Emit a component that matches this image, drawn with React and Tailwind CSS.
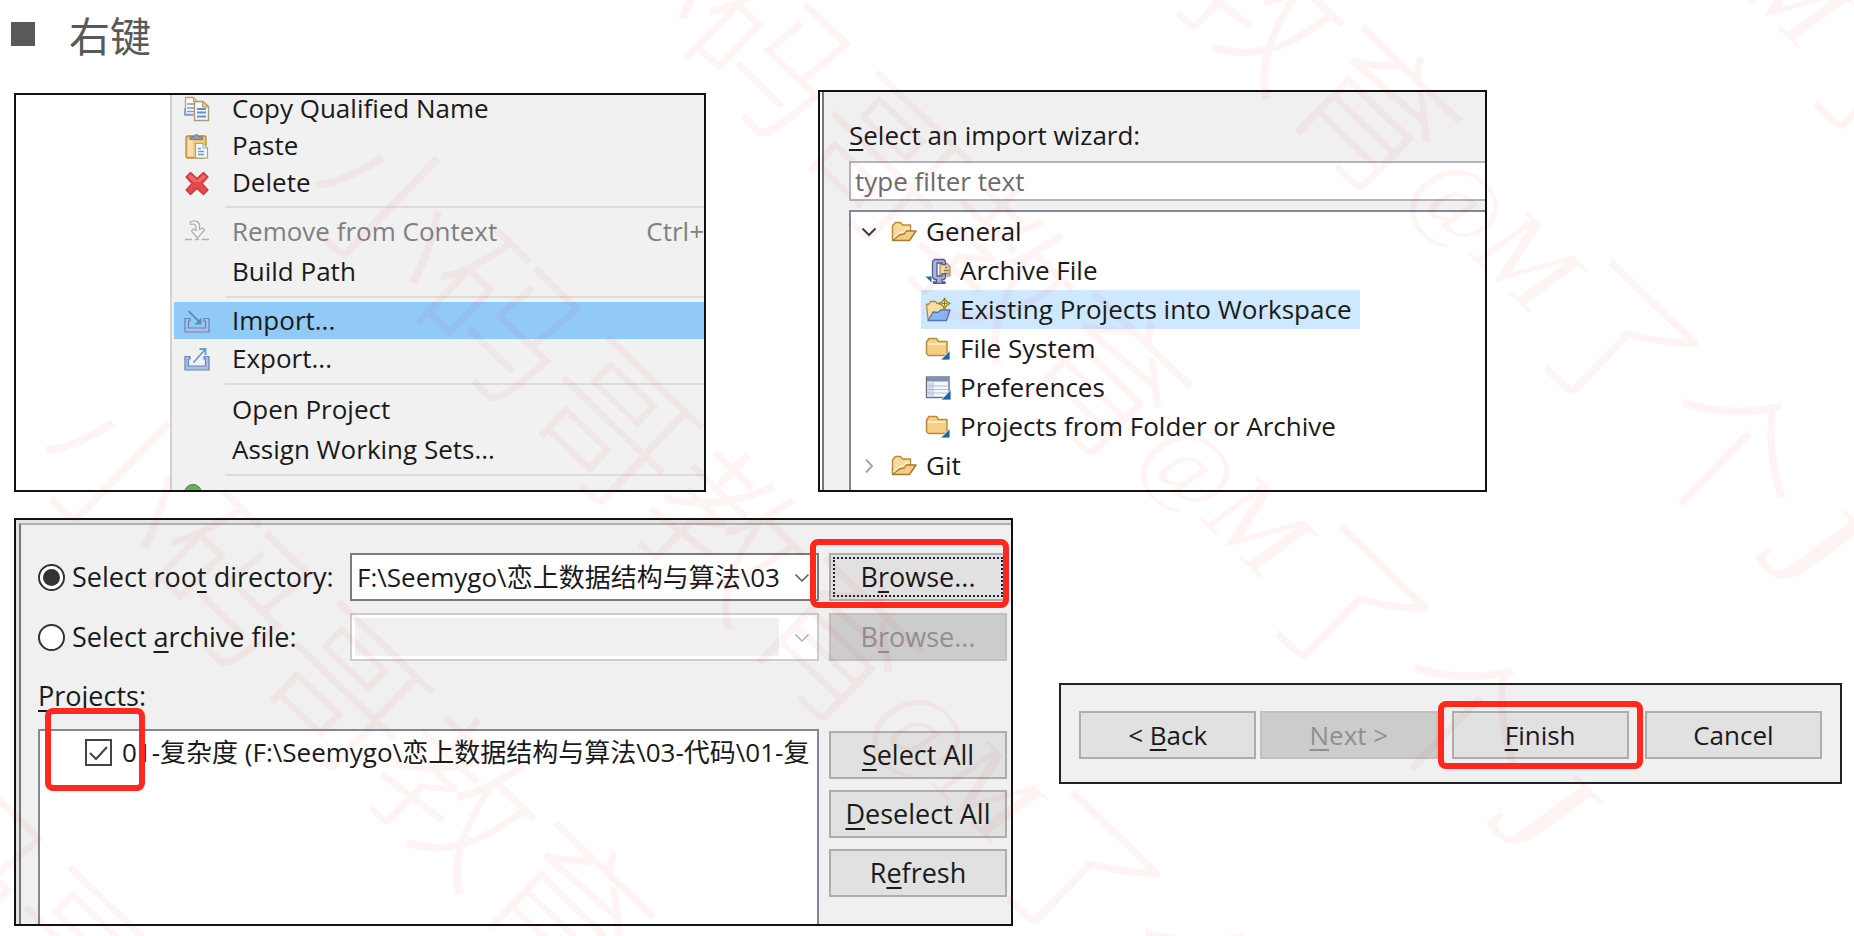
import React from "react";

const UI_FONT = "font-['Open_Sans','Noto_Sans_CJK_SC',sans-serif]";

/* ---------- icons ---------- */

function CopyIcon() {
  return (
    <svg viewBox="0 0 26 26" className="h-[26px] w-[26px]" aria-hidden="true">
      <path d="M1.5 1.5h8l4 4v13h-12z" fill="#f7f9fd" stroke="#b5a46c" strokeWidth="1.3" />
      <path d="M9.5 1.5v4h4" fill="#e9cf86" stroke="#b5a46c" />
      <path d="M3 8h8M3 12h8M3 15.500h8M1 12v7h8" stroke="#7c98cf" strokeWidth="1.6" fill="none" />
      <path d="M10.500 5.500h8.500l5.500 5v14h-14z" fill="#f4f8fe" stroke="#a99b74" strokeWidth="1.4" />
      <path d="M18.500 5.500v5.500h6z" fill="#f2d47f" stroke="#b9974d" />
      <path d="M13 13h9M13 16.500h9M13 20.500h9" stroke="#6b8ccb" strokeWidth="1.800" />
    </svg>
  );
}

function PasteIcon() {
  return (
    <svg viewBox="0 0 26 26" className="h-[26px] w-[26px]" aria-hidden="true">
      <rect x="2" y="3" width="20" height="22" rx="1.500" fill="#f3c877" stroke="#b78a3e" strokeWidth="1.300" />
      <rect x="4" y="6" width="5" height="17" fill="#fbe0a6" />
      <path d="M6 6.500V4h3.500C10 1 14.500 1 15 4h3.500v2.500z" fill="#8d9cc0" stroke="#68779f" />
      <path d="M11.500 10.500h7.500l4.500 4.500v10h-12z" fill="#f3f9ff" stroke="#a3a68f" strokeWidth="1.200" />
      <path d="M19 10.500v4.500h4.500" fill="#dce6f2" stroke="#a3a68f" />
      <path d="M14 15.500h3M14 18.500h6M14 21.500h6" stroke="#6696cf" strokeWidth="1.300" />
    </svg>
  );
}

function DeleteIcon() {
  return (
    <svg viewBox="0 0 26 26" className="h-[26px] w-[26px]" aria-hidden="true">
      <path
        d="M6.500 2.500 13 8.500l6.500-6 4.500 4.500-6 6.500 6 6.500-4.500 4.500-6.500-6-6.500 6L2 20l6-6.500L2 7z"
        fill="#e5484a"
        stroke="#c9383c"
        strokeWidth="1.200"
        strokeLinejoin="round"
      />
      <path d="M6.500 4.500 13 10.500l6.500-6L22 7l-6 5H10L4 7z" fill="#f0787a" opacity="0.700" />
    </svg>
  );
}

function RemoveIcon() {
  return (
    <svg viewBox="0 0 26 26" className="h-[26px] w-[26px]" fill="none" stroke="#b0b0b0" strokeWidth="1.300" aria-hidden="true">
      <path d="M6 3.500C9 .5 15 2 15.500 6v4.500L18.500 9l2 2-7 8-6-7 2-2 2.500 1.500V8C12 5.500 9.500 4.500 7 5.500z" fill="#f4f4f4" />
      <path d="M1 20.500h7M11 20.500h4M18 20.500h7" strokeWidth="1.700" />
    </svg>
  );
}

function TrayIcon({ out }) {
  return (
    <svg viewBox="0 0 26 26" className="h-[26px] w-[26px]" aria-hidden="true">
      <path
        d="M1 10.500h5v2.500h-1.500v7h17v-7H20v-2.500h5V24H1z"
        fill="#a9bfe6"
        stroke="#6685b8"
        strokeWidth="1.200"
      />
      {out ? (
        <path d="M9.500 16.500 21 3.500M15.500 3h6v6" fill="none" stroke="#6b9cc9" strokeWidth="1.800" />
      ) : (
        <g>
          <path d="M4.500 3 16 14.500" stroke="#5b8fc0" strokeWidth="1.800" />
          <path d="M17.500 9.500v7h-7z" fill="#5b8fc0" />
        </g>
      )}
    </svg>
  );
}

function OpenFolderIcon() {
  return (
    <svg viewBox="0 0 26 22" className="h-[22px] w-[26px] shrink-0" strokeLinejoin="round" aria-hidden="true">
      <path d="M1.500 19.500V5l3-3.500h5l2 2.500h8v6" fill="#f7da9b" stroke="#b98a3c" strokeWidth="1.500" />
      <path d="M1.500 19.500 8.500 14l4.500-1 2-3h10L18.500 19.500z" fill="#f5ce80" stroke="#a97c35" strokeWidth="1.500" />
      <path d="M2.500 17 8 12l5-1 2-3.500h4" fill="none" stroke="#fdf0cd" strokeWidth="1.500" />
    </svg>
  );
}

function ClosedFolderIcon() {
  return (
    <svg viewBox="0 0 26 26" className="h-[26px] w-[26px] shrink-0" strokeLinejoin="round" aria-hidden="true">
      <path d="M1.500 17.500V6l2.500-3.500h7.500l2 3H22v14H3.500z" fill="#f5cf85" stroke="#b98a3c" strokeWidth="1.500" />
      <path d="M3 8h17.500" stroke="#fdebc0" strokeWidth="2" />
      <path d="M25 14.500V24h-9.500z" fill="#1866a5" stroke="#fff" strokeWidth="0.800" />
    </svg>
  );
}

function ArchiveIcon() {
  return (
    <svg viewBox="0 0 26 26" className="h-[26px] w-[26px] shrink-0" aria-hidden="true">
      <path d="M15 5.500h7l3 3.500v9H15z" fill="#f3dcae" stroke="#a08a5c" strokeWidth="1.200" />
      <path d="M20 9.500h2.500M19 12.500h5M19 15.500h5" stroke="#8b8371" strokeWidth="1.300" />
      <path
        d="M9.500 1.500h9.500l1.500 2v3h-3.500V5h-5v13h5v-2h3.500v4L19 21.500h-2V24h3v1.400H8.500V24h3v-2.500h-2L7.500 19.500v-16z"
        fill="#aab6dd"
        stroke="#4f5f98"
        strokeWidth="1.300"
      />
      <path d="M.5 18.500h6v6z" fill="#1d6ba8" />
    </svg>
  );
}

function ImportProjectIcon() {
  return (
    <svg viewBox="0 0 26 26" className="h-[26px] w-[26px] shrink-0" strokeLinejoin="round" aria-hidden="true">
      <path d="M3 22.500 1.500 7.500 4 7l1.500-2.500h5l1.500 2h7v8" fill="#f9dea0" stroke="#a98947" strokeWidth="1.300" />
      <path d="M3 23.500 8 15l5 .5 2.500-2.500H25l-3.500 10.500z" fill="#8fb5ee" stroke="#4d76b8" strokeWidth="1.300" />
      <path d="M19.500 1.200 21.500 4.500 25 6.500 21.500 8.500 19.500 12 17.500 8.500 14 6.500 17.500 4.500z" fill="#fbe789" stroke="#8f7a1c" strokeWidth="1.200" />
      <path d="M19.500 3.500v6M16.500 6.500h6" stroke="#8f7a1c" strokeWidth="1" />
    </svg>
  );
}

function PreferencesIcon() {
  return (
    <svg viewBox="0 0 26 26" className="h-[26px] w-[26px] shrink-0" aria-hidden="true">
      <rect x="1.500" y="2" width="22.500" height="20.500" fill="#f5f8fd" stroke="#66708a" strokeWidth="1.400" />
      <rect x="2" y="2.500" width="21.500" height="4" fill="#7f8db0" />
      <rect x="2.500" y="6.500" width="5" height="15.500" fill="#d5def0" />
      <path d="M8 6v16M2 11h21.500M2 14.500h21.500M2 18h21.500" stroke="#b3bccf" strokeWidth="1" />
      <path d="M26 14.500V25h-10z" fill="#1866a5" stroke="#fff" strokeWidth="0.800" />
    </svg>
  );
}

function Chevron({ open, className }) {
  return (
    <svg viewBox="0 0 18 18" className={className} fill="none" stroke="currentColor" aria-hidden="true">
      <path d={open ? "M2.500 5.500 9 12l6.500-6.500" : "M6 2.500 12 9l-6 6.500"} />
    </svg>
  );
}

/* ---------- small parts ---------- */

const Key = ({ children }) => (
  <span className="underline decoration-2 underline-offset-4">{children}</span>
);

const Highlight = ({ className }) => (
  <span
    aria-hidden="true"
    className={"pointer-events-none absolute z-10 rounded-lg border-[6px] border-[#ff281e] " + className}
  />
);

function PushButton({ children, disabled, className = "" }) {
  return (
    <button
      type="button"
      disabled={disabled}
      className={
        "block h-12 w-full border-2 text-center whitespace-nowrap " +
        (disabled ? "border-[#c0c0c0] bg-[#cccccc] text-[#909090] " : "border-[#adadad] bg-[#e1e1e1] text-[#1a1a1a] ") +
        className
      }
    >
      {children}
    </button>
  );
}

function MenuRow({ icon, label, shortcut, className }) {
  return (
    <li>
      <button type="button" className={"flex w-full items-center text-left whitespace-nowrap " + className}>
        <span className="flex w-[46px] shrink-0 justify-center">{icon}</span>
        <span className="flex-1 pl-3">{label}</span>
        {shortcut && <span>{shortcut}</span>}
      </button>
    </li>
  );
}

const MenuRule = () => (
  <li role="separator" className="ml-[51px] flex h-[11px] items-center">
    <span className="h-0.5 w-full bg-[#dcdcdc]" />
  </li>
);

/* ---------- panels ---------- */

function ContextMenu() {
  return (
    <section className="flex min-w-0 overflow-hidden border-2 border-[#111] bg-white">
      <div className="w-[154px] shrink-0" />
      <ul className="min-w-0 flex-1 border-l-2 border-[#d2d2d2] bg-[#f1f1f1] pl-0.5">
        <MenuRow className="h-8 pb-[5px] leading-[27px]" icon={<CopyIcon />} label="Copy Qualified Name" />
        <MenuRow className="h-[37px]" icon={<PasteIcon />} label="Paste" />
        <MenuRow className="h-[37px]" icon={<DeleteIcon />} label="Delete" />
        <MenuRule />
        <MenuRow className="h-[39px] text-[#808080]" icon={<RemoveIcon />} label="Remove from Context" shortcut="Ctrl+" />
        <MenuRow className="h-10" label="Build Path" />
        <MenuRule />
        <MenuRow className="h-[37px] bg-[#91c9f7]" icon={<TrayIcon />} label="Import..." />
        <MenuRow className="h-[39px]" icon={<TrayIcon out />} label="Export..." />
        <MenuRule />
        <MenuRow className="h-10" label="Open Project" />
        <MenuRow className="h-10" label="Assign Working Sets..." />
        <MenuRule />
        <li className="flex h-[10px] items-end pl-[10px]">
          <svg viewBox="0 0 18 6" className="h-1.5 w-[18px]" aria-hidden="true">
            <circle cx="9" cy="9" r="8.500" fill="#62b551" stroke="#3c8a34" />
          </svg>
        </li>
      </ul>
    </section>
  );
}

function TreeGroup({ label, open }) {
  return (
    <div className="flex h-[39px] items-center pl-[9px]">
      <Chevron
        open={open}
        className={"mr-[13px] h-[18px] w-[18px] stroke-2 " + (open ? "text-[#404040]" : "text-[#a6a6a6]")}
      />
      <OpenFolderIcon />
      <span className="ml-[9px]">{label}</span>
    </div>
  );
}

function TreeItem({ icon, label, selected }) {
  return (
    <li className="flex h-[39px] pl-[70px]">
      <span className={"flex items-center gap-[9px] pr-2 pl-1 whitespace-nowrap " + (selected ? "bg-[#cde8ff]" : "")}>
        {icon}
        {label}
      </span>
    </li>
  );
}

function ImportWizard() {
  return (
    <section className="col-start-3 min-w-0 overflow-hidden border-2 border-[#111] bg-white pl-0.5">
      <div className="border-l-2 border-[#777] bg-[#f0f0f0] pl-[25px]">
        <label htmlFor="wizard-filter" className="block pt-[25px] pb-[7px] leading-[37px]">
          <Key>S</Key>elect an import wizard:
        </label>
        <input
          id="wizard-filter"
          type="text"
          placeholder="type filter text"
          className="mb-[9px] block h-10 w-full border-2 border-r-0 border-[#b4b4bc] bg-white px-1 placeholder:text-[#6d6d6d] placeholder:opacity-100"
        />
        <div className="border-t-2 border-l-2 border-[#82879a] bg-white pb-[5px]">
          <TreeGroup label="General" open />
          <ul>
            <TreeItem icon={<ArchiveIcon />} label="Archive File" />
            <TreeItem icon={<ImportProjectIcon />} label="Existing Projects into Workspace" selected />
            <TreeItem icon={<ClosedFolderIcon />} label="File System" />
            <TreeItem icon={<PreferencesIcon />} label="Preferences" />
            <TreeItem icon={<ClosedFolderIcon />} label="Projects from Folder or Archive" />
          </ul>
          <TreeGroup label="Git" />
        </div>
      </div>
    </section>
  );
}

function RadioLabel({ id, checked, children }) {
  return (
    <div className="flex items-center gap-[7px] whitespace-nowrap">
      <input
        id={id}
        type="radio"
        name="source"
        defaultChecked={checked}
        className="grid h-[27px] w-[27px] shrink-0 appearance-none place-items-center rounded-full border-2 border-[#333] bg-white before:h-[17px] before:w-[17px] before:rounded-full checked:before:bg-[#333]"
      />
      <label htmlFor={id}>{children}</label>
    </div>
  );
}

function SelectProjects() {
  return (
    <section className="min-w-0 border-2 border-[#111] bg-[#e4e4e4] pt-[3px] pl-[3px] text-[27px]">
      <div className="border-t-2 border-l-2 border-t-[#b0b0b0] border-l-[#777] bg-[#f0f0f0] pt-7 pr-1 pl-[17px]">
        <div className="grid grid-cols-[312px_1fr_178px] gap-y-3">
          <RadioLabel id="root-dir" checked>
            Select roo<Key>t</Key> directory:
          </RadioLabel>
          <div className="relative mr-[10px] min-w-0">
            <select
              aria-label="Root directory"
              className="block h-12 w-full appearance-none border-2 border-[#7a7a7a] bg-white pr-[38px] pl-[5px] text-[26px]"
            >
              <option>F:\Seemygo\恋上数据结构与算法\03</option>
            </select>
            <Chevron open className="pointer-events-none absolute top-4 right-2 h-[18px] w-[18px] stroke-[1.5] text-[#555]" />
          </div>
          <div className="relative">
            <PushButton className="outline-2 -outline-offset-6 outline-dotted outline-[#222]">
              B<Key>r</Key>owse...
            </PushButton>
            <Highlight className="-top-[14px] -right-0.5 -bottom-[7px] -left-[19px]" />
          </div>

          <RadioLabel id="archive-file">
            Select <Key>a</Key>rchive file:
          </RadioLabel>
          <div className="relative mr-[10px] min-w-0 border-2 border-[#cccccc] bg-white py-[3px] pr-[38px] pl-[3px]">
            <select
              aria-label="Archive file"
              disabled
              className="block h-[38px] w-full appearance-none bg-[#f0f0f0] opacity-100"
            />
            <Chevron open className="pointer-events-none absolute top-[14px] right-1.5 h-[18px] w-[18px] stroke-[1.5] text-[#b0b0b0]" />
          </div>
          <PushButton disabled>
            B<Key>r</Key>owse...
          </PushButton>
        </div>

        <h2 className="pt-[17px] pb-[15px] leading-9">
          <Key>P</Key>rojects:
        </h2>

        <div className="grid grid-cols-[1fr_178px] gap-x-[10px]">
          <div className="relative min-w-0 border-2 border-b-0 border-[#82879a] bg-white pt-[3px] pl-[45px]">
            <div className="flex items-center gap-[10px] text-[26px] leading-9 whitespace-nowrap">
              <span className="relative h-[27px] w-[27px] shrink-0">
                <input
                  id="project-01"
                  type="checkbox"
                  defaultChecked
                  className="block h-[27px] w-[27px] appearance-none border-2 border-[#444] bg-white"
                />
                <svg viewBox="0 0 27 27" className="pointer-events-none absolute inset-0" fill="none" aria-hidden="true">
                  <path d="m5 14 6 6L22 8" stroke="#444" strokeWidth="2" />
                </svg>
              </span>
              <label htmlFor="project-01">01-复杂度 (F:\Seemygo\恋上数据结构与算法\03-代码\01-复</label>
            </div>
            <Highlight className="-top-[23px] left-[5px] h-[83px] w-[100px]" />
          </div>
          <div className="flex flex-col gap-[11px] pt-0.5 pb-[27px]">
            <PushButton>
              <Key>S</Key>elect All
            </PushButton>
            <PushButton>
              <Key>D</Key>eselect All
            </PushButton>
            <PushButton>
              R<Key>e</Key>fresh
            </PushButton>
          </div>
        </div>
      </div>
    </section>
  );
}

function WizardButtons() {
  return (
    <section className="mt-[165px] flex min-w-0 border-2 border-[#222] bg-[#f0f0f0] px-[18px] pt-[26px] pb-[23px]">
      <div className="mr-1 flex-1">
        <PushButton>
          &lt; <Key>B</Key>ack
        </PushButton>
      </div>
      <div className="flex-1">
        <PushButton disabled>
          <Key>N</Key>ext &gt;
        </PushButton>
      </div>
      <div className="relative mr-4 ml-[14px] flex-1">
        <PushButton>
          <Key>F</Key>inish
        </PushButton>
        <Highlight className="-inset-x-[14px] -inset-y-[10px]" />
      </div>
      <div className="flex-1">
        <PushButton>Cancel</PushButton>
      </div>
    </section>
  );
}

function Watermark() {
  const lines = [-2, -1, 0, 1, 2, 3];
  return (
    <svg
      aria-hidden="true"
      className="pointer-events-none absolute inset-0 z-20 h-full w-full font-['Liberation_Serif','Noto_Sans_CJK_SC',serif] font-light"
      fill="#ff0000"
      fillOpacity="0.045"
    >
      {lines.map((n) => (
        <text key={n} transform={`translate(${292 + n * 269} ${196 - n * 265}) rotate(44)`} fontSize="156">
          小码哥教育
          <tspan fontSize="96" fontStyle="italic" dy="-20">@</tspan>
          <tspan fontSize="110" fontStyle="italic">M</tspan>
          <tspan dy="20">了个</tspan>
          <tspan fontSize="150" fontStyle="italic" dx="10">J</tspan>
        </text>
      ))}
    </svg>
  );
}

export default function App() {
  return (
    <main className={"relative min-h-screen overflow-hidden bg-white pr-3 pl-[14px] text-[26px] text-[#1a1a1a] " + UI_FONT}>
      <header className="-ml-[3px] mb-[22px] flex h-[68px] items-center gap-[34px]">
        <span className="h-6 w-6 bg-[#595959]" />
        <h1 className="font-['Noto_Sans_CJK_SC',sans-serif] text-[41px] leading-none text-[#595959]">右键</h1>
      </header>
      <div className="mb-[26px] grid grid-cols-[692fr_112fr_669fr_355fr] items-end">
        <ContextMenu />
        <ImportWizard />
      </div>
      <div className="grid grid-cols-[999fr_783fr] items-start gap-x-[46px]">
        <SelectProjects />
        <WizardButtons />
      </div>
      <Watermark />
    </main>
  );
}
